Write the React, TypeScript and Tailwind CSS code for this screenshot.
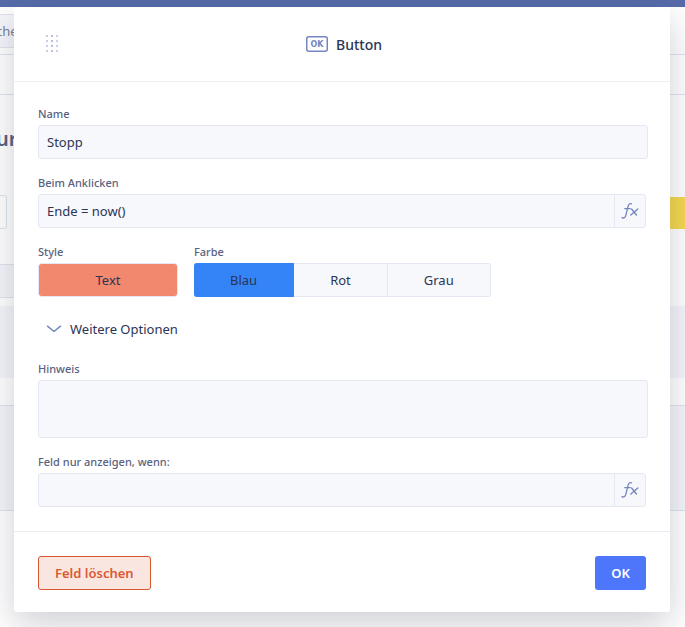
import React, { useState } from 'react';

const inputClass =
  'h-[34px] w-full min-w-0 rounded-[3px] border border-[#e5e8f2] bg-[#f7f8fc] px-2 text-[13px] text-[#2b3454] outline-none';

interface FieldProps {
  id: string;
  label: string;
  children: React.ReactNode;
}

const Field = ({ id, label, children }: FieldProps) => {
  return (
    <div className="flex flex-col gap-[3px]">
      <label htmlFor={id} className="text-[11px] leading-4 font-medium text-[#596180]">
        {label}
      </label>
      {children}
    </div>
  );
};

const FormulaIcon = () => {
  return (
    <svg
      width="18"
      height="18"
      viewBox="0 0 18 18"
      fill="none"
      stroke="#7385bd"
      strokeWidth="1.3"
      strokeLinecap="round"
    >
      <path d="M1 15.6 C2.6 16.6 4.2 15.8 4.8 13.4 L7 4.6 C7.6 2 8.8 1.2 10.6 1.8" />
      <path d="M3.8 6.7 H9.2" />
      <path d="M10.6 7 L15.4 13" />
      <path d="M16.8 7 L9.8 13" />
    </svg>
  );
};

interface FormulaInputProps {
  id: string;
  defaultValue?: string;
}

const FormulaInput = ({ id, defaultValue }: FormulaInputProps) => {
  return (
    <div className="mr-0.5 flex h-[34px] overflow-hidden rounded-[3px] border border-[#e5e8f2] bg-[#f7f8fc]">
      <input
        id={id}
        type="text"
        defaultValue={defaultValue}
        className="h-8 min-w-0 flex-1 px-2 text-[13px] leading-5 text-[#2b3454] outline-none"
      />
      <button
        type="button"
        aria-label="Formel"
        className="flex w-[31px] items-center justify-center border-l border-[#e5e8f2]"
      >
        <FormulaIcon />
      </button>
    </div>
  );
};

const DragHandle = () => {
  return (
    <svg width="12" height="18" viewBox="0 0 12 18" shapeRendering="crispEdges">
      {[0, 5, 10, 15].map((y) => (
        <g key={y}>
          <rect x="0" y={y} width="2" height="2" fill="#c6cee4" />
          <rect x="5" y={y} width="2" height="2" fill="#b2bfdf" />
          <rect x="10" y={y} width="2" height="2" fill="#cdd1e2" />
        </g>
      ))}
    </svg>
  );
};

const OkIcon = () => {
  return (
    <svg width="22" height="16" viewBox="0 0 22 16" fill="none">
      <rect x="0.75" y="0.75" width="20.5" height="14.5" rx="2" stroke="#7486bf" strokeWidth="1.5" />
      <text
        x="11"
        y="11"
        textAnchor="middle"
        fontFamily="'DejaVu Sans', sans-serif"
        fontWeight="bold"
        fontSize="8"
        fill="#7486bf"
      >
        OK
      </text>
    </svg>
  );
};

const PageBehind = () => {
  return (
    <div className="min-h-screen bg-white">
      <div className="h-[7px] bg-[#566ba9]" />
      <div className="h-12 border-b border-[#dfe2f0] pt-[7px]">
        <div className="-ml-1 h-[34px] w-1/3 border-y border-[#e0e3ee] bg-[#f5f6fb] text-[13px] leading-8 text-[#7c8090]">
          che
        </div>
      </div>
      <div className="h-10 border-b border-[#dfe2f0]" />
      <div className="h-[100px] pt-7">
        <h1 className="-ml-1 text-xl leading-8 font-semibold text-[#596180]">ur</h1>
      </div>
      <div className="flex items-end justify-between">
        <div className="h-[34px] w-[7px] rounded-r-[3px] border border-l-0 border-[#dfe4f2] bg-white" />
        <div className="h-8 w-20 bg-[#f5d84f]" />
      </div>
      <div className="mt-[35px] h-[34px] w-1/2 border-y border-[#e0e3ee] bg-[#f5f6fa]" />
      <div className="mt-2 h-[72px] bg-[#f5f6fb]" />
      <div className="mt-[27px] h-[106px] border-y border-[#dfe2f0] bg-[#f5f6fb]" />
    </div>
  );
};

const colors = ['Blau', 'Rot', 'Grau'];

const ButtonDialog = () => {
  const [color, setColor] = useState('Blau');

  return (
    <div
      role="dialog"
      aria-labelledby="dialog-title"
      className="absolute top-[7px] right-[15px] left-[14px] rounded-[3px] bg-white shadow-[0_12px_36px_rgba(30,38,60,0.22)]"
    >
      <header className="grid h-[75px] grid-cols-[1fr_auto_1fr] items-center border-b border-[#eeeef2] pr-7 pl-8">
        <DragHandle />
        <div className="flex items-center gap-2">
          <OkIcon />
          <h2 id="dialog-title" className="text-sm leading-[21px] font-medium text-[#2b3454]">
            Button
          </h2>
        </div>
      </header>

      <div className="flex flex-col gap-4 border-b border-[#e9ebf3] py-6 pr-[22px] pl-6">
        <Field id="name" label="Name">
          <input id="name" type="text" defaultValue="Stopp" className={inputClass} />
        </Field>
        <Field id="on-click" label="Beim Anklicken">
          <FormulaInput id="on-click" defaultValue="Ende = now()" />
        </Field>

        <div className="flex gap-4">
          <Field id="style" label="Style">
            <button
              id="style"
              type="button"
              className="h-[34px] w-[140px] rounded-[3px] border border-[#e5e8f2] bg-[#f2886d] bg-clip-padding text-[13px] leading-5 text-[#2b3454]"
            >
              Text
            </button>
          </Field>
          <div className="flex flex-col gap-[3px]">
            <span id="color-label" className="text-[11px] leading-4 font-medium text-[#596180]">
              Farbe
            </span>
            <div
              role="group"
              aria-labelledby="color-label"
              className="flex h-[34px] divide-x divide-[#e5e8f2] text-[13px] leading-5 text-[#2b3454]"
            >
              {colors.map((item) => (
                <button
                  key={item}
                  type="button"
                  aria-pressed={item === color}
                  onClick={() => setColor(item)}
                  className={`border-y px-9 first:rounded-l-[3px] last:rounded-r-[3px] last:border-r ${
                    item === color ? 'border-[#3584f7] bg-[#3584f7]' : 'border-[#e5e8f2] bg-[#f7f8fc]'
                  }`}
                >
                  {item}
                </button>
              ))}
            </div>
          </div>
        </div>

        <button
          type="button"
          className="flex h-8 items-center gap-2 self-start pl-2 text-[13px] leading-5 text-[#2b3454]"
        >
          <svg width="16" height="8" viewBox="0 0 16 8" fill="none" stroke="#7486bf" strokeWidth="1.5">
            <path d="M1.5 1.2 L8 6.5 L14.5 1.2" strokeLinecap="round" strokeLinejoin="round" />
          </svg>
          Weitere Optionen
        </button>

        <Field id="hint" label="Hinweis">
          <textarea
            id="hint"
            className="block h-[58px] w-full resize-none rounded-[3px] border border-[#e5e8f2] bg-[#f7f8fc] px-2 py-1 text-[13px] text-[#2b3454] outline-none"
          />
        </Field>
        <Field id="condition" label="Feld nur anzeigen, wenn:">
          <FormulaInput id="condition" />
        </Field>
      </div>

      <footer className="flex justify-between px-6 pt-6 pb-[22px] text-[13px] leading-5 font-semibold">
        <button
          type="button"
          className="h-[34px] rounded-[3px] border border-[#d9572f] bg-[#fae6e1] px-4 text-[#db5a34]"
        >
          Feld löschen
        </button>
        <button type="button" className="h-[34px] rounded-[3px] bg-[#4d76fb] px-4 text-white">
          OK
        </button>
      </footer>
    </div>
  );
};

const App = () => {
  return (
    <div className="relative min-h-screen overflow-hidden font-['Noto_Sans',sans-serif]">
      <PageBehind />
      <ButtonDialog />
    </div>
  );
};

export default App;
